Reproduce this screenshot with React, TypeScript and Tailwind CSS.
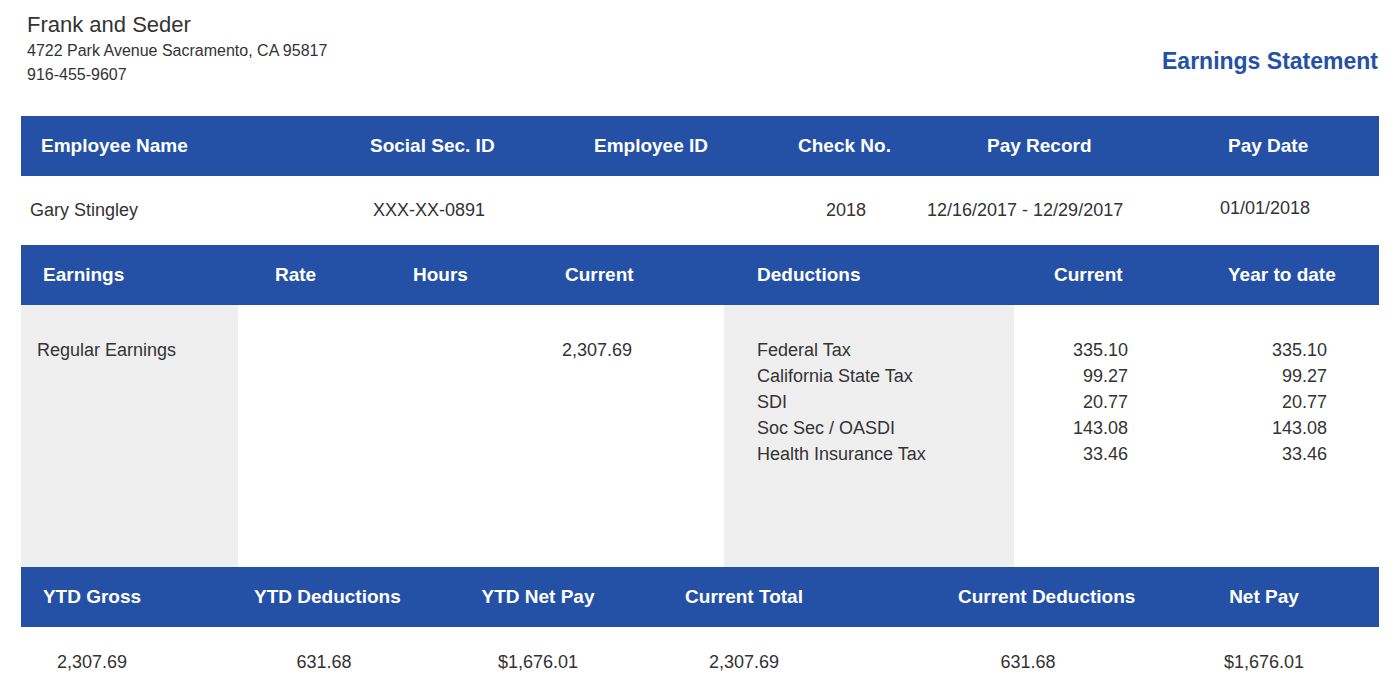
export default function App() {
  const ded = [
    ["Federal Tax", "335.10"],
    ["California State Tax", "99.27"],
    ["SDI", "20.77"],
    ["Soc Sec / OASDI", "143.08"],
    ["Health Insurance Tax", "33.46"],
  ];
  const bar = "h-[60px] bg-[#2451a6] text-white font-bold text-[19px] flex items-center";
  return (
    <div className="w-[1400px] h-[700px] bg-white text-[#333] overflow-hidden" style={{ fontFamily: '"Liberation Sans", Arial, sans-serif' }}>
      <div className="flex justify-between items-start pl-[27px] pr-[22px] pt-[11px] h-[116px]">
        <div>
          <div className="text-[22px] leading-[28px]">Frank and Seder</div>
          <div className="text-[16px] leading-[24px]">4722 Park Avenue Sacramento, CA 95817</div>
          <div className="text-[16px] leading-[24px]">916-455-9607</div>
        </div>
        <div className="text-[#2451a6] font-bold text-[23px] mt-[33px]">Earnings Statement</div>
      </div>
      <div className="mx-[21px] w-[1358px]">
        <div className={bar}>
          <div className="w-[349px] pl-[20px]">Employee Name</div>
          <div className="w-[224px]">Social Sec. ID</div>
          <div className="w-[204px]">Employee ID</div>
          <div className="w-[189px]">Check No.</div>
          <div className="w-[241px]">Pay Record</div>
          <div>Pay Date</div>
        </div>
        <div className="h-[69px] flex items-center text-[18px]">
          <div className="w-[352px] pl-[9px]">Gary Stingley</div>
          <div className="w-[453px]">XXX-XX-0891</div>
          <div className="w-[101px]">2018</div>
          <div className="w-[293px]">12/16/2017 - 12/29/2017</div>
          <div className="-mt-[4px]">01/01/2018</div>
        </div>
        <div className={bar}>
          <div className="w-[254px] pl-[22px]">Earnings</div>
          <div className="w-[138px]">Rate</div>
          <div className="w-[152px]">Hours</div>
          <div className="w-[192px]">Current</div>
          <div className="w-[297px]">Deductions</div>
          <div className="w-[174px]">Current</div>
          <div>Year to date</div>
        </div>
        <div className="h-[262px] flex text-[18px] leading-[26px]">
          <div className="w-[217px] bg-[#efefef] pl-[16px] pt-[32px]">Regular Earnings</div>
          <div className="w-[486px] pt-[32px] pl-[324px]">2,307.69</div>
          <div className="w-[290px] bg-[#efefef] pl-[33px] pt-[32px]">
            {ded.map(d => <div key={d[0]}>{d[0]}</div>)}
          </div>
          <div className="w-[114px] pt-[32px] text-right">
            {ded.map(d => <div key={d[0]}>{d[1]}</div>)}
          </div>
          <div className="w-[199px] pt-[32px] text-right">
            {ded.map(d => <div key={d[0]}>{d[1]}</div>)}
          </div>
        </div>
        <div className={bar}>
          <div className="w-[140px] ml-[1px] text-center">YTD Gross</div>
          <div className="w-[140px] ml-[92px] text-center whitespace-nowrap">YTD Deductions</div>
          <div className="w-[140px] ml-[74px] text-center">YTD Net Pay</div>
          <div className="w-[140px] ml-[66px] text-center">Current Total</div>
          <div className="w-[140px] ml-[144px] text-center whitespace-nowrap">Current Deductions</div>
          <div className="w-[140px] ml-[96px] text-center">Net Pay</div>
        </div>
        <div className="h-[68px] flex items-center text-[18px] pt-[2px]">
          <div className="w-[140px] ml-[1px] text-center">2,307.69</div>
          <div className="w-[140px] ml-[92px] text-center">631.68</div>
          <div className="w-[140px] ml-[74px] text-center">$1,676.01</div>
          <div className="w-[140px] ml-[66px] text-center">2,307.69</div>
          <div className="w-[140px] ml-[144px] text-center">631.68</div>
          <div className="w-[140px] ml-[96px] text-center">$1,676.01</div>
        </div>
      </div>
    </div>
  );
}
